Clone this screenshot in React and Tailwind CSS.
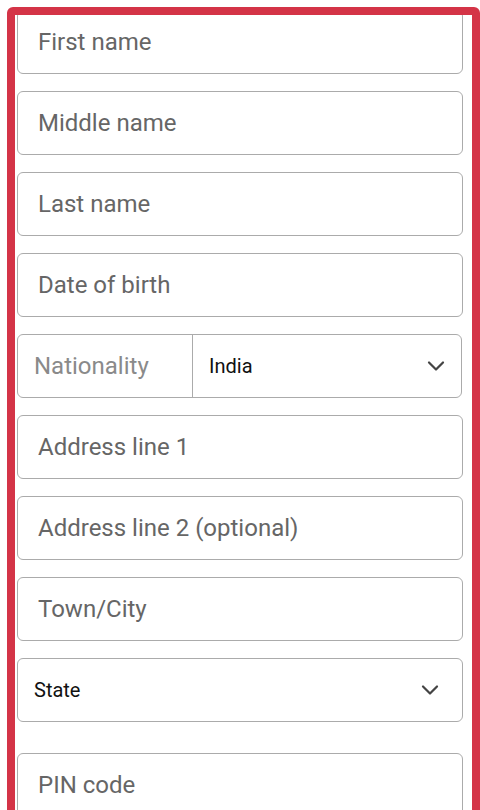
import { ChevronDown } from 'lucide-react';

const font = { fontFamily: 'Roboto, "Noto Sans", sans-serif' };

function TextField({ placeholder }) {
  return (
    <input
      type="text"
      placeholder={placeholder}
      className="block h-[64px] w-full rounded-[6px] border border-[#ababab] bg-white px-[20px] text-[24px] text-[#222] outline-none placeholder:text-[#666]"
      style={font}
    />
  );
}

function SelectField({ value }) {
  return (
    <div className="flex h-[64px] w-full items-center justify-between rounded-[6px] border border-[#ababab] bg-white pl-[16px] pr-[18px]">
      <span className="text-[20px] text-[#111]" style={font}>{value}</span>
      <ChevronDown size={28} strokeWidth={1.9} className="text-[#444]" />
    </div>
  );
}

export default function App() {
  return (
    <div className="h-[810px] overflow-hidden bg-white pl-[7px] pt-[7px]">
      <div className="h-[830px] w-[473px] overflow-hidden rounded-[6px] border-8 border-[#d43447] pl-[2px] pr-[9px]">
        <div className="-mt-[5px] flex flex-col gap-[17px]">
          <TextField placeholder="First name" />
          <TextField placeholder="Middle name" />
          <TextField placeholder="Last name" />
          <TextField placeholder="Date of birth" />
          <div className="flex h-[64px] w-[445px] rounded-[6px] border border-[#ababab] bg-white">
            <div className="flex w-[175px] items-center border-r border-[#ababab] pl-[16px] text-[24px] text-[#8a8a8a]" style={font}>
              Nationality
            </div>
            <div className="flex flex-1 items-center justify-between pl-[16px] pr-[11px]">
              <span className="text-[20px] text-[#111]" style={font}>India</span>
              <ChevronDown size={28} strokeWidth={1.9} className="text-[#444]" />
            </div>
          </div>
          <TextField placeholder="Address line 1" />
          <TextField placeholder="Address line 2 (optional)" />
          <TextField placeholder="Town/City" />
          <SelectField value="State" />
          <div className="mt-[14px]">
            <TextField placeholder="PIN code" />
          </div>
        </div>
      </div>
    </div>
  );
}
